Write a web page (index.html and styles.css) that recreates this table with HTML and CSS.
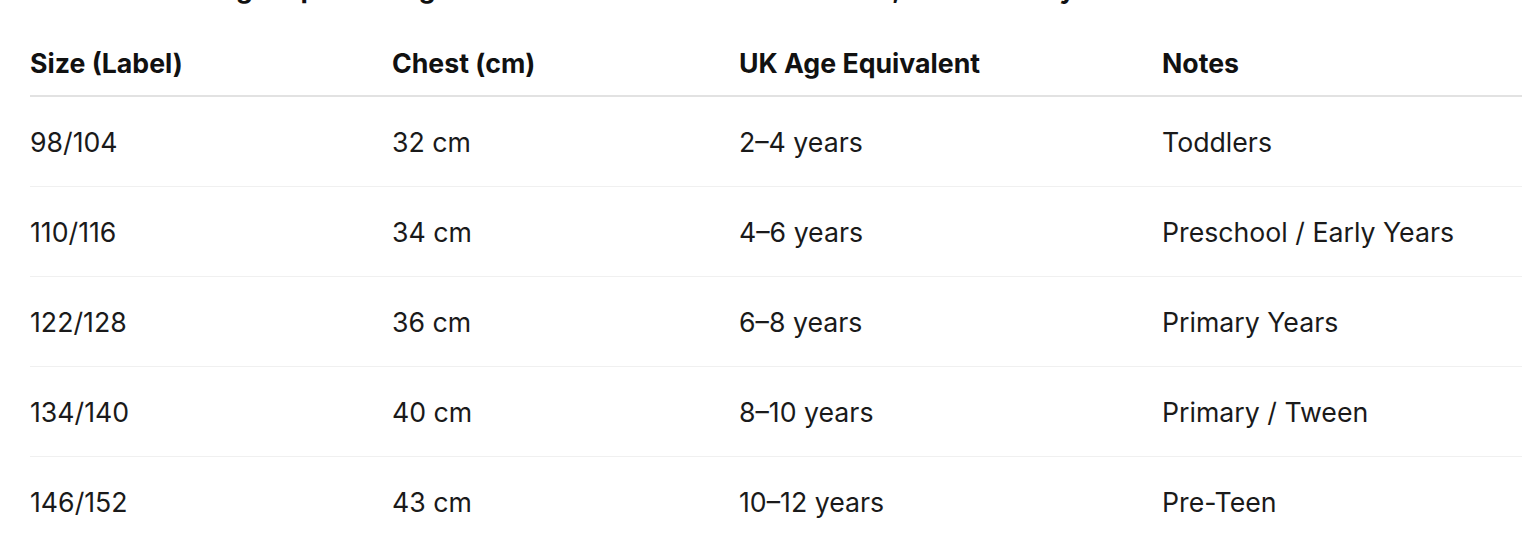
FILE: index.html
```html
<!DOCTYPE html>
<html lang="en">
<head>
<meta charset="utf-8">
<title>UK Age Equivalent Guide</title>
<link rel="stylesheet" href="styles.css">
</head>
<body>
<main class="page">
  <p class="intro">Here is the UK age equivalent guide for the sizes in the table below, matched to your chest measurement and label.</p>
  <table class="sizes">
    <colgroup>
      <col class="c1">
      <col class="c2">
      <col class="c3">
      <col class="c4">
    </colgroup>
    <thead>
      <tr><th>Size (Label)</th><th>Chest (cm)</th><th>UK Age Equivalent</th><th>Notes</th></tr>
    </thead>
    <tbody>
      <tr><td>98/104</td><td>32 cm</td><td>2–4 years</td><td>Toddlers</td></tr>
      <tr><td>110/116</td><td>34 cm</td><td>4–6 years</td><td>Preschool / Early Years</td></tr>
      <tr><td>122/128</td><td>36 cm</td><td>6–8 years</td><td>Primary Years</td></tr>
      <tr><td>134/140</td><td>40 cm</td><td>8–10 years</td><td>Primary / Tween</td></tr>
      <tr><td>146/152</td><td>43 cm</td><td>10–12 years</td><td>Pre-Teen</td></tr>
    </tbody>
  </table>
</main>
</body>
</html>
```
FILE: styles.css
```css
html, body {
  margin: 0;
  padding: 0;
  background: #ffffff;
}
body {
  font-family: Inter, "Liberation Sans", sans-serif;
  color: #1a1a1a;
  font-size: 26.7px;
  line-height: 39px;
  overflow: hidden;
}
.page {
  padding-left: 30px;
}
.intro {
  margin: -31px 0 23px 0;
  font-weight: 700;
  white-space: nowrap;
  color: #111;
}
.sizes {
  width: 1492px;
  border-collapse: collapse;
  table-layout: fixed;
}
.c1 { width: 362px; }
.c2 { width: 347px; }
.c3 { width: 423px; }
.c4 { width: 360px; }
.sizes th {
  text-align: left;
  font-weight: 700;
  color: #111;
  padding: 13px 0 12px 0;
  border-bottom: 2px solid #e2e2e2;
}
.sizes td {
  padding: 26px 0 24px 0;
  border-bottom: 1px solid #f0f0f0;
  font-weight: 400;
}
.sizes tbody tr:last-child td {
  border-bottom: none;
}
```
